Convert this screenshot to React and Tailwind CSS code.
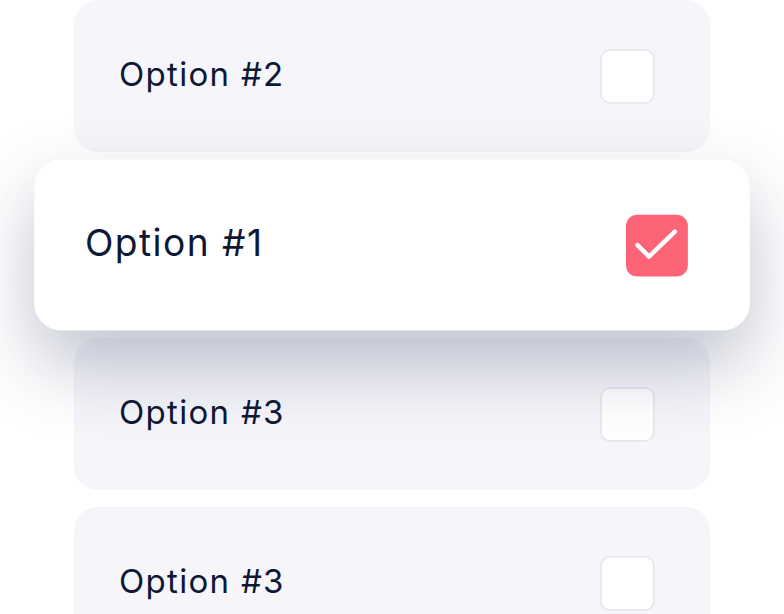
const OPTIONS = [
  { id: 2, label: 'Option #2', checked: false },
  { id: 1, label: 'Option #1', checked: true },
  { id: 3, label: 'Option #3', checked: false },
  { id: 4, label: 'Option #3', checked: false },
];

function Checkbox({ checked }) {
  if (checked) {
    return (
      <span className="flex h-[55px] w-[55px] shrink-0 items-center justify-center rounded-[10px] bg-[#fd6477]">
        <svg viewBox="0 0 62 62" className="h-[55px] w-[55px]" fill="none">
          <path d="M11.5 30.5 L23 42 L49 17" stroke="white" strokeWidth="4.5" strokeLinecap="round" strokeLinejoin="round" />
        </svg>
      </span>
    );
  }
  return <span className="h-[55px] w-[55px] shrink-0 rounded-[10px] border-2 border-[#e9e9ef] bg-white" />;
}

function OptionCard({ label, checked }) {
  return (
    <div
      className={
        checked
          ? 'relative z-10 flex h-[152px] scale-[1.125] items-center justify-between rounded-[24px] bg-white pl-[45px] pr-[55px] shadow-[0_30px_65px_rgba(45,55,95,0.3)]'
          : 'flex h-[152px] items-center justify-between rounded-[24px] bg-[#f5f5fa] pl-[45px] pr-[55px]'
      }
    >
      <span className="-mt-[3px] font-['Inter',sans-serif] text-[33px] font-normal tracking-[1.3px] text-[#0e1834]">{label}</span>
      <Checkbox checked={checked} />
    </div>
  );
}

export default function App() {
  return (
    <div className="h-[614px] w-[784px] overflow-hidden bg-white">
      <div className="ml-[74px] flex w-[636px] flex-col gap-[17px]">
        {OPTIONS.map((opt) => (
          <OptionCard key={opt.id} label={opt.label} checked={opt.checked} />
        ))}
      </div>
    </div>
  );
}
